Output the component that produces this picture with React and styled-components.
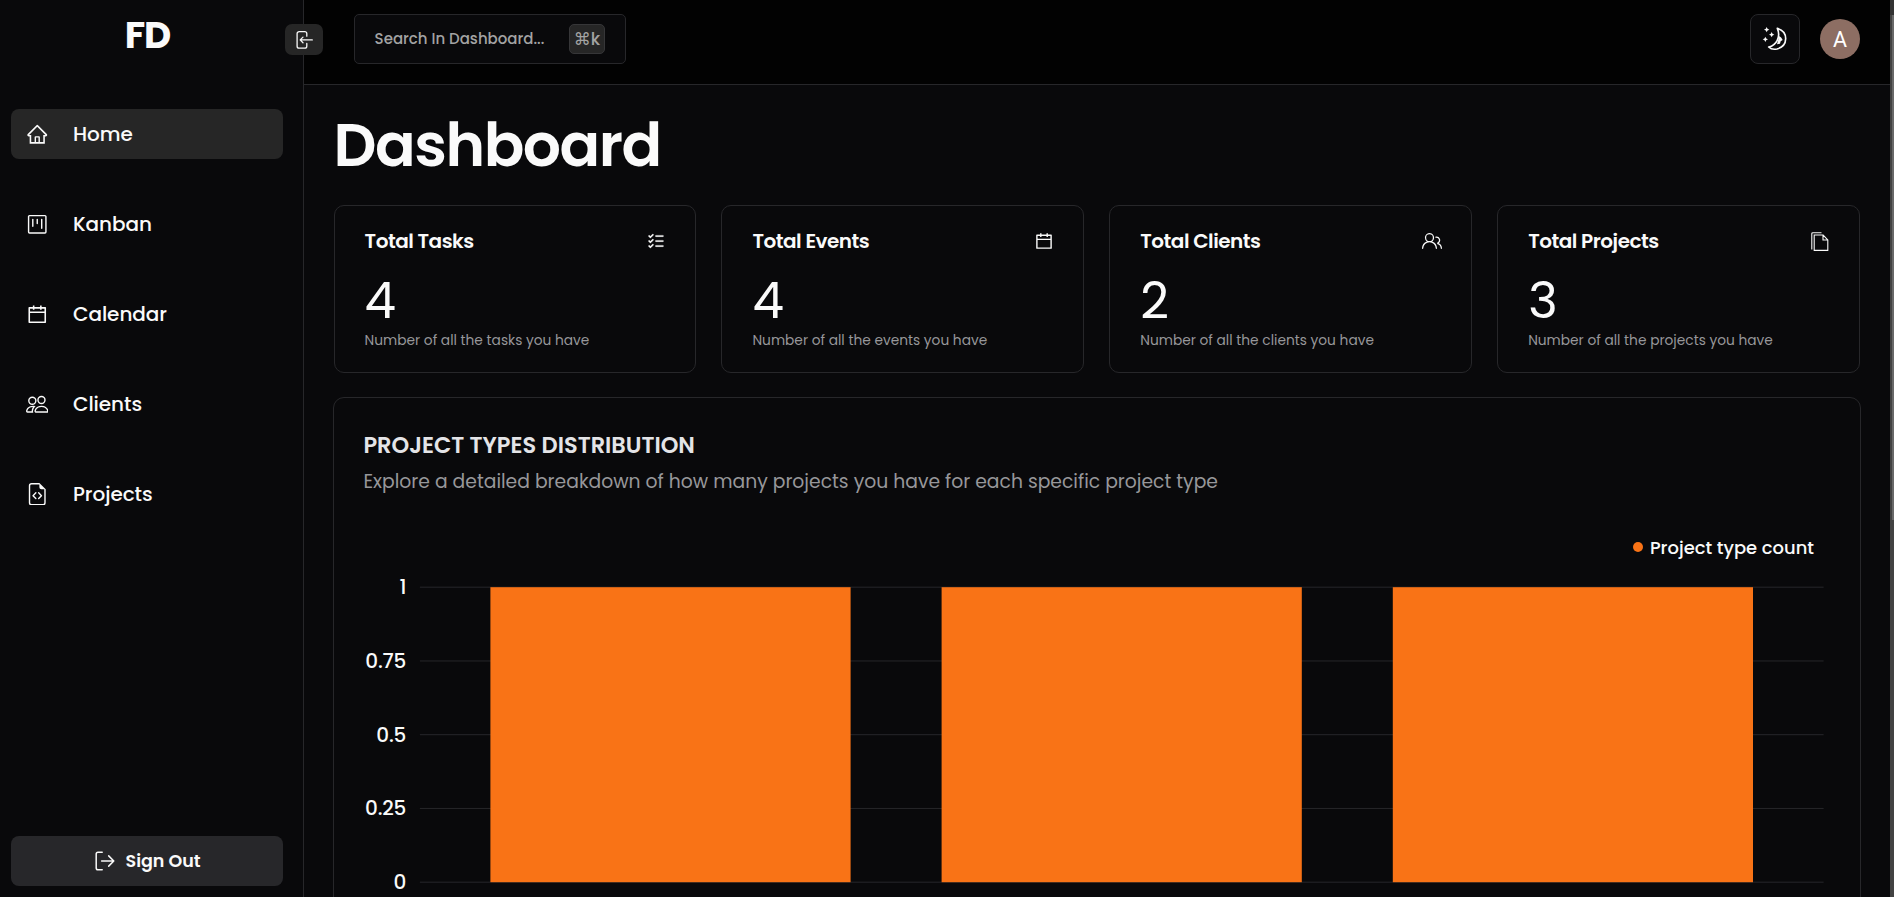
import React from "react";
import styled, { createGlobalStyle } from "styled-components";
import { AiOutlineHome, AiOutlineCalendar } from "react-icons/ai";
import { GoProject, GoPeople } from "react-icons/go";
import { BsPeople, BsFileEarmarkCode } from "react-icons/bs";
import { PiListChecks } from "react-icons/pi";

const GlobalStyle = createGlobalStyle`
  * { box-sizing: border-box; }
  body {
    margin: 0;
    overflow: hidden;
    background: #09090b;
    color: #fafafa;
    font-family: Poppins, Inter, "Liberation Sans", sans-serif;
  }
  h1, h2, p { margin: 0; }
  button { font-family: inherit; color: inherit; padding: 0; }
`;

const Page = styled.div`
  display: flex;
  height: 897px;
  overflow: hidden;
`;

const Sidebar = styled.aside`
  position: relative;
  flex: none;
  width: 304px;
  padding: 12px 20px 11px 11px;
  border-right: 1px solid #27272a;
  display: flex;
  flex-direction: column;
`;

const Logo = styled.div`
  height: 48px;
  margin-bottom: 49px;
  padding-left: 1px;
  text-align: center;
  font-size: 37.5px;
  line-height: 47px;
  font-weight: 700;
  letter-spacing: -0.03em;
`;

const Nav = styled.nav`
  display: flex;
  flex-direction: column;
  gap: 40px;
`;

const NavItem = styled.a`
  display: flex;
  align-items: center;
  gap: 24.75px;
  height: 50px;
  padding-left: 14.75px;
  border-radius: 8px;
  font-size: 20px;
  font-weight: 500;
  letter-spacing: -0.003em;
  background: ${(p) => (p.$active ? "#262626" : "transparent")};
  svg { flex: none; }
`;

const SignOut = styled.button`
  display: flex;
  align-items: center;
  justify-content: center;
  gap: 11px;
  height: 50px;
  margin-top: auto;
  padding-bottom: 1px;
  padding-left: 1px;
  border: 0;
  border-radius: 8px;
  background: #27272a;
  font-size: 17.5px;
  font-weight: 600;
  letter-spacing: -0.003em;
`;

const CollapseButton = styled.button`
  position: absolute;
  top: 24px;
  right: -20px;
  display: grid;
  place-items: center;
  width: 38px;
  height: 31px;
  border: 0;
  border-radius: 7px;
  background: #262626;
`;

const Content = styled.div`
  flex: 1;
  min-width: 0;
`;

const Header = styled.header`
  display: flex;
  align-items: center;
  height: 85px;
  padding: 0 30px 7px 50px;
  border-bottom: 1px solid #27272a;
  background: #020202;
`;

const Search = styled.button`
  display: flex;
  align-items: center;
  justify-content: space-between;
  width: 272px;
  height: 50px;
  padding: 0 20px 0 19.6px;
  margin-right: auto;
  border: 1px solid #27272a;
  border-radius: 5px;
  background: #09090b;
  color: #a3a3a3;
  font-size: 15px;
  font-weight: 500;
`;

const Shortcut = styled.kbd`
  display: grid;
  place-items: center;
  width: 36px;
  height: 30px;
  border: 1px solid #363638;
  border-radius: 5px;
  background: #262626;
  font: 500 17px Poppins, "DejaVu Sans", sans-serif;
`;

const ThemeButton = styled.button`
  display: grid;
  place-items: center;
  width: 50px;
  height: 50px;
  border: 1px solid #27272a;
  border-radius: 8px;
  background: #09090b;
`;

const Avatar = styled.div`
  width: 40px;
  height: 40px;
  margin-left: 20px;
  border-radius: 50%;
  background: #8d6e63;
  color: #fff;
  font: 21.5px/41px Roboto, sans-serif;
  text-align: center;
`;

const Main = styled.main`
  padding: 24px 29px 0;
`;

const Title = styled.h1`
  padding-left: 0.6px;
  font-size: 60px;
  line-height: 72px;
  font-weight: 600;
  letter-spacing: -0.025em;
  margin-bottom: 24px;
`;

const Stats = styled.section`
  display: grid;
  grid-template-columns: repeat(4, 1fr);
  gap: 25px;
  margin: 0 1px 24px 0.6px;
`;

const StatCard = styled.article`
  height: 168px;
  padding: 20px 30px;
  border: 1px solid #27272a;
  border-radius: 10px;
`;

const StatHead = styled.div`
  display: flex;
  align-items: center;
  justify-content: space-between;
  height: 30px;
  margin: 0 -1px 15px 0;
`;

const StatTitle = styled.h2`
  font-size: 20px;
  font-weight: 600;
  letter-spacing: -0.025em;
`;

const StatValue = styled.p`
  font-size: 50px;
  line-height: 60px;
`;

const StatNote = styled.p`
  font-size: 13.75px;
  line-height: 20px;
  color: #97979a;
`;

const ChartCard = styled.section`
  height: 620px;
  padding: 31px 29.4px;
  border: 1px solid #27272a;
  border-radius: 11px;
`;

const ChartTitle = styled.h2`
  font-size: 22.5px;
  line-height: 32px;
  font-weight: 600;
  color: #e4e4e7;
`;

const ChartNote = styled.p`
  margin-top: 6px;
  font-size: 18.75px;
  line-height: 30px;
  color: #97979a;
`;

const Legend = styled.div`
  display: flex;
  align-items: center;
  justify-content: flex-end;
  gap: 7px;
  height: 30px;
  margin: 35px 16.6px 0 0;
  font-size: 17.95px;
  font-weight: 500;
`;

const LegendDot = styled.span`
  width: 10px;
  height: 10px;
  border-radius: 50%;
  background: #f97316;
`;

const Chart = styled.svg`
  display: block;
  overflow: visible;
  text {
    fill: #fafafa;
    font-size: 20px;
    font-weight: 500;
    text-anchor: end;
    letter-spacing: -0.01em;
  }
`;

const ScrollTrack = styled.div`
  flex: none;
  width: 4px;
  padding: 15px 0 0 2px;
  background: linear-gradient(#333 15px, #424242 15px);
`;

const ScrollThumb = styled.div`
  height: 505px;
  background: #686868;
`;

const CollapseIcon = () => (
  <svg width="18" height="20" viewBox="0 0 18 20" fill="none" stroke="#fafafa" strokeWidth="1.3" strokeLinecap="round" strokeLinejoin="round">
    <path d="M11.8 6.2V3.6a2 2 0 0 0-2-2H4.1a2 2 0 0 0-2 2v12.6a2 2 0 0 0 2 2h5.7a2 2 0 0 0 2-2v-2.8M17.3 9.9H5.3M8 7.1 5.2 9.9 8 12.7" />
  </svg>
);

const SignOutIcon = () => (
  <svg width="20" height="20" viewBox="0 0 20 20" fill="none" stroke="#fafafa" strokeWidth="1.5" strokeLinecap="round" strokeLinejoin="round">
    <path d="M7.2 1.2H3a1.8 1.8 0 0 0-1.8 1.8v14A1.8 1.8 0 0 0 3 18.8h4.2M6.6 10h12.2M13.7 4.9 18.8 10l-5.1 5.1" />
  </svg>
);

const MoonIcon = () => (
  <svg width="26" height="26" viewBox="66 47 78 78" fill="#fafafa">
    <path d="M112 54C146 64 145 107 111 116C101 118 91 115 86 110C109 105 123 80 112 54Z" fill="none" stroke="#fafafa" strokeWidth="5" strokeLinejoin="round" />
    <path d="M118 77l6 5 4 7-6 4-2 7-9 2z" />
    <path d="M80 50l2.6 5.4L88 58l-5.4 2.6L80 66l-2.6-5.4L72 58l5.4-2.6zM95 65l2.6 5.4 5.4 2.6-5.4 2.6L95 81l-2.6-5.4L87 73l5.4-2.6zM76 79l2.6 5.4L84 87l-5.4 2.6L76 95l-2.6-5.4L68 87l5.4-2.6z" />
  </svg>
);

const FilesIcon = () => (
  <svg width="19" height="19" viewBox="0 0 19 19" fill="none" stroke="#fafafa" strokeWidth="1.1">
    <path d="M10.5.7H1.8a1 1 0 0 0-1 1v15.8M3.2 18.4V3h8.9l4.7 4.9v10.5zM12 3v5h4.8" />
  </svg>
);

const navItems = [
  { label: "Home", Icon: AiOutlineHome, active: true },
  { label: "Kanban", Icon: GoProject },
  { label: "Calendar", Icon: AiOutlineCalendar },
  { label: "Clients", Icon: BsPeople },
  { label: "Projects", Icon: BsFileEarmarkCode },
];

const stats = [
  { name: "Tasks", value: 4, icon: <PiListChecks size={20} strokeWidth={5} /> },
  { name: "Events", value: 4, icon: <AiOutlineCalendar size={20} /> },
  { name: "Clients", value: 2, icon: <GoPeople size={20} /> },
  { name: "Projects", value: 3, icon: <FilesIcon /> },
];

const ticks = ["1", "0.75", "0.5", "0.25", "0"];
const bars = [1, 1, 1];
const plot = { left: 56.9, right: 1460.6, top: 10.2, height: 295 };

export default function App() {
  return (
    <>
      <GlobalStyle />
      <Page>
        <Sidebar>
          <Logo>FD</Logo>
          <Nav>
            {navItems.map(({ label, Icon, active }) => (
              <NavItem key={label} $active={active}>
                <Icon size={22.5} />
                {label}
              </NavItem>
            ))}
          </Nav>
          <SignOut><SignOutIcon />Sign Out</SignOut>
          <CollapseButton><CollapseIcon /></CollapseButton>
        </Sidebar>
        <Content>
          <Header>
            <Search>
              Search In Dashboard...
              <Shortcut>⌘k</Shortcut>
            </Search>
            <ThemeButton><MoonIcon /></ThemeButton>
            <Avatar>A</Avatar>
          </Header>
          <Main>
            <Title>Dashboard</Title>
            <Stats>
              {stats.map(({ name, value, icon }) => (
                <StatCard key={name}>
                  <StatHead>
                    <StatTitle>Total {name}</StatTitle>
                    {icon}
                  </StatHead>
                  <StatValue>{value}</StatValue>
                  <StatNote>Number of all the {name.toLowerCase()} you have</StatNote>
                </StatCard>
              ))}
            </Stats>
            <ChartCard>
              <ChartTitle>PROJECT TYPES DISTRIBUTION</ChartTitle>
              <ChartNote>Explore a detailed breakdown of how many projects you have for each specific project type</ChartNote>
              <Legend><LegendDot />Project type count</Legend>
              <Chart width="1467" height="320" viewBox="0 -15 1467 320">
                {ticks.map((t, i) => {
                  const y = plot.top + (plot.height / 4) * i;
                  return (
                    <g key={t}>
                      <line x1={plot.left} x2={plot.right} y1={y} y2={y} stroke="#27272a" />
                      <text x="43.2" y={y + 7}>{t}</text>
                    </g>
                  );
                })}
                {bars.map((v, i) => (
                  <rect
                    key={i}
                    x={127.4 + i * 451.2}
                    y={plot.top + plot.height * (1 - v)}
                    width="360.2"
                    height={plot.height * v}
                    fill="#f97316"
                  />
                ))}
              </Chart>
            </ChartCard>
          </Main>
        </Content>
        <ScrollTrack><ScrollThumb /></ScrollTrack>
      </Page>
    </>
  );
}
